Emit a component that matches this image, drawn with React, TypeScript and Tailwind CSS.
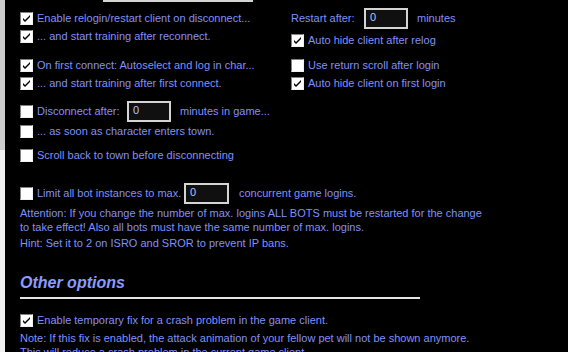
import React from "react";

const font = { fontFamily: '"Liberation Sans", Arial, sans-serif' };

function Check({ checked }: { checked?: boolean }) {
  return (
    <span className="inline-flex w-[13px] h-[13px] shrink-0 border border-t-[#808080] border-l-[#808080] border-b-[#f0f0f0] border-r-[#f0f0f0] bg-white items-center justify-center">
      {checked && (
        <svg width="9" height="9" viewBox="0 0 9 9">
          <path d="M1 4 L3 6 L8 1 L8 3 L3 8 L1 6 Z" fill="#000" />
        </svg>
      )}
    </span>
  );
}

function Row({ checked, children, className = "" }: { checked?: boolean; children: React.ReactNode; className?: string }) {
  return (
    <div className={"flex items-center h-[18px] " + className}>
      <Check checked={checked} />
      <span className="ml-[4px] whitespace-nowrap">{children}</span>
    </div>
  );
}

function Input({ className = "" }: { className?: string }) {
  return (
    <div className={"h-[21px] shrink-0 border-2 border-[#d4d4d4] bg-[#101010] text-[#b8c2ff] pl-[4px] leading-[14px] text-[11px] " + className}>0</div>
  );
}

export default function App() {
  return (
    <div className="w-[568px] h-[352px] overflow-hidden bg-black flex text-[11px] text-[#8090f8]" style={font}>
      <div className="w-[5px] flex flex-col shrink-0">
        <div className="h-[150px] bg-[#cdcdcd]" />
        <div className="flex-1 bg-[#f0f0f0]" />
      </div>
      <div className="flex-1 pl-[15px]">
        <div className="ml-[83px] w-[150px] h-[22px] -mt-[20px] border-2 border-[#d4d4d4] bg-[#101010] flex justify-end">
          <div className="w-[16px] bg-[#c8c8c8]" />
        </div>
        <div className="grid grid-cols-[270px_1fr]">
          <div className="flex flex-col pt-[7px]">
            <Row checked>Enable relogin/restart client on disconnect...</Row>
            <Row checked>... and start training after reconnect.</Row>
            <Row checked className="mt-[11px]">On first connect: Autoselect and log in char...</Row>
            <Row checked>... and start training after first connect.</Row>
          </div>
          <div className="flex flex-col pt-[5px]">
            <div className="flex items-center h-[22px]">
              <span className="ml-[1px] w-[73px] whitespace-nowrap">Restart after:</span>
              <Input className="w-[44px]" />
              <span className="ml-[9px]">minutes</span>
            </div>
            <Row checked className="mt-[2px] ml-[1px]">Auto hide client after relog</Row>
            <Row className="mt-[7px] ml-[1px]">Use return scroll after login</Row>
            <Row checked className="ml-[1px]">Auto hide client on first login</Row>
          </div>
        </div>
        <div className="flex items-center h-[22px] mt-[8px]">
          <Check />
          <span className="ml-[4px] w-[90px] whitespace-nowrap">Disconnect after:</span>
          <Input className="w-[44px]" />
          <span className="ml-[9px] whitespace-nowrap">minutes in game...</span>
        </div>
        <Row>... as soon as character enters town.</Row>
        <Row className="mt-[6px]">Scroll back to town before disconnecting</Row>
        <div className="flex items-center h-[22px] mt-[18px]">
          <Check />
          <span className="ml-[4px] w-[147px] whitespace-nowrap">Limit all bot instances to max.</span>
          <Input className="w-[45px]" />
          <span className="ml-[10px] whitespace-nowrap">concurrent game logins.</span>
        </div>
        <div className="mt-[2px] leading-[14px] whitespace-nowrap">
          <div>Attention: If you change the number of max. logins ALL BOTS must be restarted for the change</div>
          <div>to take effect! Also all bots must have the same number of max. logins.</div>
        </div>
        <div className="mt-[2px] leading-[14px] whitespace-nowrap">Hint: Set it to 2 on ISRO and SROR to prevent IP bans.</div>
        <div className="mt-[23px] w-[400px] border-b-2 border-[#e4e4e4] pb-[4px]">
          <div className="text-[16px] font-bold italic text-[#8a9bff] leading-[20px]">Other options</div>
        </div>
        <Row checked className="mt-[12px]">Enable temporary fix for a crash problem in the game client.</Row>
        <div className="mt-[2px] leading-[14px] whitespace-nowrap">
          <div>Note: If this fix is enabled, the attack animation of your fellow pet will not be shown anymore.</div>
          <div>This will reduce a crash problem in the current game client.</div>
        </div>
      </div>
    </div>
  );
}
